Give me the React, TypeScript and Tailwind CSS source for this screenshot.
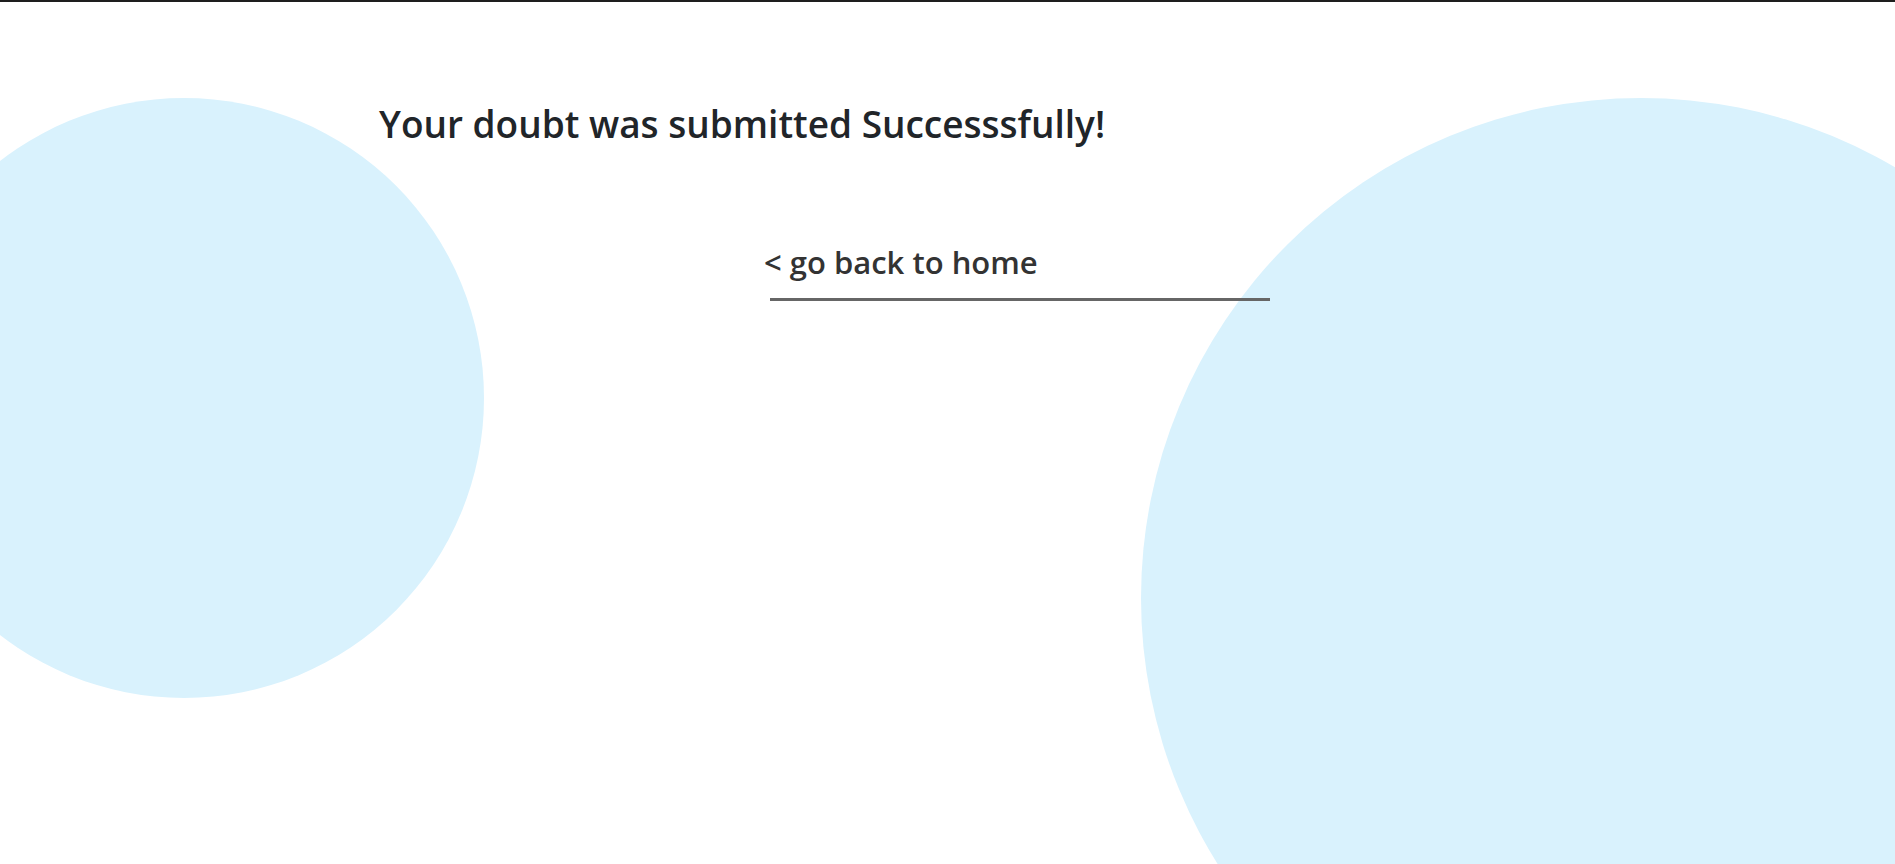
export default function App() {
  return (
    <div className="relative h-screen w-full overflow-hidden border-t-2 border-[#1e1e1e] bg-white font-['Open_Sans',sans-serif]">
      {/* background bubbles */}
      <div className="absolute left-[-116px] top-[96px] h-[600px] w-[600px] rounded-full bg-[#d9f2fd]" />
      <div className="absolute left-[1141px] top-[96px] h-[1000px] w-[1000px] rounded-full bg-[#d9f2fd]" />

      <main className="relative flex flex-col">
        <h1 className="mt-[98px] pl-[379px] text-[37px] font-semibold leading-[48px] text-[#212529]">
          Your doubt was submitted Successsfully!
        </h1>

        <div className="mt-[94px] ml-[764px] flex flex-col">
          <a href="#" className="text-[31px] font-semibold leading-[40px] text-[#333]">
            &lt; go back to home
          </a>
          <div className="ml-[6px] mt-[16px] h-[3px] w-[500px] bg-[#666]" />
        </div>
      </main>
    </div>
  );
}
